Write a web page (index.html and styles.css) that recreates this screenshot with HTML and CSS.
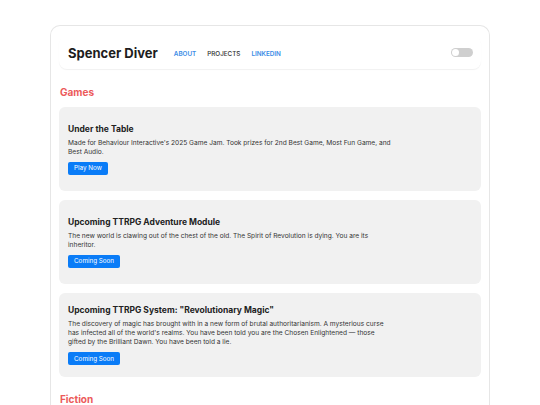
FILE: index.html
```html
<!DOCTYPE html>
<html lang="en">
<head>
<meta charset="UTF-8" />
<meta name="viewport" content="width=device-width, initial-scale=1.0"/>
<title>Spencer Diver - Projects</title>
<link rel="stylesheet" href="styles.css">
</head>
<body>
<div class="page">
    <header class="topbar">
        <div class="brand">Spencer Diver</div>
        <nav class="nav">
            <a href="#" class="nav-link">About</a>
            <a href="#" class="nav-link active">Projects</a>
            <a href="#" class="nav-link">LinkedIn</a>
        </nav>
        <div class="toggle"><span class="knob"></span></div>
    </header>

    <h2 class="section-title">Games</h2>
    <div class="project">
        <h3>Under the Table</h3>
        <p>Made for Behaviour Interactive's 2025 Game Jam. Took prizes for 2nd Best Game, Most Fun Game, and Best Audio.</p>
        <button class="btn">Play Now</button>
    </div>
    <div class="project">
        <h3>Upcoming TTRPG Adventure Module</h3>
        <p>The new world is clawing out of the chest of the old. The Spirit of Revolution is dying. You are its inheritor.</p>
        <button class="btn">Coming Soon</button>
    </div>
    <div class="project">
        <h3>Upcoming TTRPG System: "Revolutionary Magic"</h3>
        <p>The discovery of magic has brought with in a new form of brutal authoritarianism. A mysterious curse has infected all of the world's realms. You have been told you are the Chosen Enlightened &mdash; those gifted by the Brilliant Dawn. You have been told a lie.</p>
        <button class="btn">Coming Soon</button>
    </div>

    <h2 class="section-title">Fiction</h2>
</div>
</body>
</html>
```

FILE: styles.css
```css
body {
    margin: 0;
    background: #fff;
    font-family: "Inter", "Liberation Sans", sans-serif;
    color: #222;
}
.page {
    width: 422px;
    margin: 25px auto 0;
    padding: 10px 8px 0;
    border: 1px solid #e6e6e6;
    border-bottom: none;
    border-radius: 10px 10px 0 0;
}
.topbar {
    display: flex;
    align-items: center;
    height: 33px;
    padding: 0 8px 0 9px;
    border-radius: 8px;
    box-shadow: 0 1px 1px rgba(0,0,0,0.06);
}
.brand {
    font-size: 13px;
    font-weight: 700;
    color: #1d1d1d;
}
.nav {
    display: flex;
    gap: 11px;
    margin-left: 16px;
    margin-top: 3px;
}
.nav-link {
    font-size: 6.3px;
    font-weight: 600;
    text-transform: uppercase;
    text-decoration: none;
    color: #3a8ce6;
}
.nav-link.active {
    color: #333;
    font-weight: 500;
}
.toggle {
    margin-left: auto;
    width: 22px;
    height: 9px;
    border-radius: 5px;
    background: #cfcfcf;
    display: flex;
    align-items: center;
    padding: 0 1px;
    box-sizing: border-box;
}
.knob {
    width: 7px;
    height: 7px;
    border-radius: 50%;
    background: #fff;
}
.section-title {
    margin: 17px 0 9px 1px;
    font-size: 10px;
    line-height: 12px;
    font-weight: 700;
    color: #ec5a5a;
}
.project {
    height: 84px;
    box-sizing: border-box;
    padding: 0 9px;
    margin-bottom: 9px;
    background: #f1f1f1;
    border-radius: 6px;
    display: flex;
    flex-direction: column;
    justify-content: center;
    align-items: flex-start;
}
.project + .section-title {
    margin-top: 16px;
}
.project h3 {
    margin: 0 0 4px;
    font-size: 8.5px;
    line-height: 11px;
    font-weight: 700;
    color: #222;
}
.project p {
    margin: 0 0 5px;
    max-width: 324px;
    font-size: 6.6px;
    line-height: 9px;
    color: #333;
}
.btn {
    font-family: inherit;
    font-size: 6.3px;
    color: #fff;
    background: #0a7cf7;
    border: none;
    border-radius: 2px;
    height: 13px;
    padding: 0 6px;
    cursor: pointer;
}
```
